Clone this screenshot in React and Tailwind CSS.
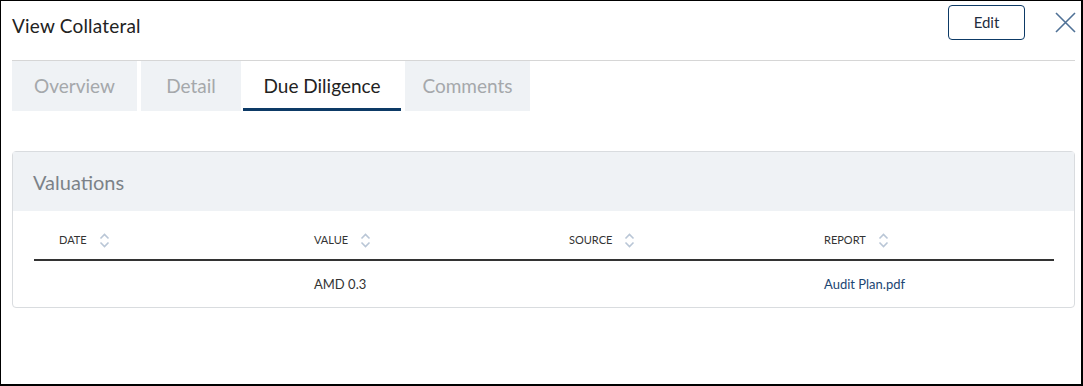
import React from "react";

const tabs = [
  { label: "Overview", w: "w-[125px]" },
  { label: "Detail", w: "w-[100px]" },
  { label: "Due Diligence", w: "w-[158px]" },
  { label: "Comments", w: "w-[125px]" },
];
const cols = ["Date", "Value", "Source", "Report"];

function SortIcon() {
  return (
    <svg width="11" height="15" viewBox="0 0 11 15" fill="none" className="ml-[12px]">
      <path d="M1.5 5.5 L5.5 1.5 L9.5 5.5" stroke="#b9c6d6" strokeWidth="1.6" />
      <path d="M1.5 9.5 L5.5 13.5 L9.5 9.5" stroke="#b9c6d6" strokeWidth="1.6" />
    </svg>
  );
}

export default function App() {
  return (
    <div
      className="w-[1083px] h-[386px] bg-white border-t border-l border-r-2 border-b-2 border-black text-[#222]"
      style={{ fontFamily: "Lato, 'Noto Sans', sans-serif" }}
    >
      <div className="pl-[11px] pr-[6px]">
        <div className="flex items-start justify-between h-[60px] border-b border-[#d6d6d6]">
          <div className="text-[19px] leading-[24px] pt-[13px] tracking-[0.2px]">View Collateral</div>
          <div className="flex items-start pt-[4px]">
            <button className="w-[77px] h-[35px] border border-[#0d3a66] rounded-[4px] text-[15px] text-[#1f2d3d]">
              Edit
            </button>
            <svg width="21" height="21" viewBox="0 0 21 21" className="ml-[30px] mr-[-1px] mt-[7px]">
              <path d="M1 1 L20 20 M20 1 L1 20" stroke="#4f7196" strokeWidth="1.6" />
            </svg>
          </div>
        </div>

        <div className="flex h-[50px]">
          {tabs.map((t, i) => {
            const active = t.label === "Due Diligence";
            return (
              <div
                key={t.label}
                className={
                  (active
                    ? "text-[#222] bg-white border-b-[3px] border-[#0d3a66] pt-[3px] ml-[2px]"
                    : "text-[#a5a8ab] bg-[#eff2f5] " + (i === 0 ? "" : "ml-[4px]")) +
                  " " + t.w + " flex items-center justify-center text-[19px]"
                }
              >
                {t.label}
              </div>
            );
          })}
        </div>

        <div className="mt-[40px] border border-[#d9dcdf] rounded-[4px]">
          <div className="h-[59px] bg-[#eff2f5] flex items-center px-[20px] pt-[1px] text-[20px] text-[#7c8288]">
            Valuations
          </div>
          <div className="pl-[21px] pr-[20px]">
            <div className="grid grid-cols-4 h-[50px] border-b-2 border-[#333] items-center pt-[10px]">
              {cols.map((c) => (
                <div key={c} className="flex items-center pl-[25px] text-[11px] uppercase text-[#333]">
                  {c}
                  <SortIcon />
                </div>
              ))}
            </div>
            <div className="grid grid-cols-4 h-[46px] items-center pt-[2px] text-[13px]">
              <div className="pl-[25px]"></div>
              <div className="pl-[25px] text-[#333]">AMD 0.3</div>
              <div className="pl-[25px]"></div>
              <div className="pl-[25px] text-[#1b4572]">Audit Plan.pdf</div>
            </div>
          </div>
        </div>
      </div>
    </div>
  );
}
